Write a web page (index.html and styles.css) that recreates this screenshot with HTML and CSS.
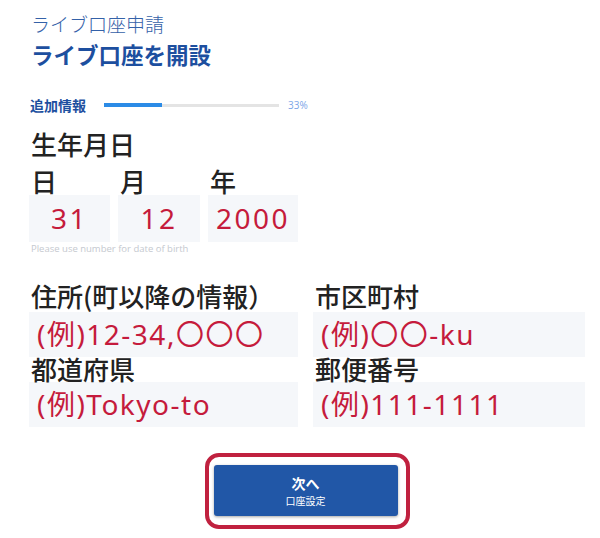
FILE: index.html
```html
<!DOCTYPE html>
<html lang="ja">
<head>
<meta charset="utf-8">
<title>ライブ口座を開設</title>
<link rel="stylesheet" href="styles.css">
</head>
<body>
<main class="page">
  <p class="eyebrow">ライブ口座申請</p>
  <h1 class="title">ライブ口座を開設</h1>

  <div class="progress">
    <span class="progress-label">追加情報</span>
    <div class="track"><div class="fill" style="width:33%"></div></div>
    <span class="progress-pct">33%</span>
  </div>

  <section class="birth">
    <h2 class="label big">生年月日</h2>
    <div class="birth-row">
      <div class="birth-col day">
        <div class="label">日</div>
        <div class="field center">31</div>
      </div>
      <div class="birth-col month">
        <div class="label">月</div>
        <div class="field center">12</div>
      </div>
      <div class="birth-col year">
        <div class="label">年</div>
        <div class="field center">2000</div>
      </div>
    </div>
    <p class="hint">Please use number for date of birth</p>
  </section>

  <section class="address">
    <div class="addr-col left">
      <div class="label">住所(町以降の情報）</div>
      <div class="field">(例)12-34,〇〇〇</div>
      <div class="label">都道府県</div>
      <div class="field">(例)Tokyo-to</div>
    </div>
    <div class="addr-col right">
      <div class="label">市区町村</div>
      <div class="field">(例)〇〇-ku</div>
      <div class="label">郵便番号</div>
      <div class="field">(例)111-1111</div>
    </div>
  </section>

  <div class="cta">
    <button class="next" type="button">
      <span class="next-main">次へ</span>
      <span class="next-sub">口座設定</span>
    </button>
  </div>
</main>
</body>
</html>
```

FILE: styles.css
```css
* { box-sizing: border-box; }

html, body {
  margin: 0;
  padding: 0;
  background: #ffffff;
}

body {
  font-family: "Noto Sans CJK JP", "Noto Sans", sans-serif;
  color: #222222;
}

.page {
  width: 556px;
  margin-left: 29px;
  padding-top: 10px;
}

.eyebrow {
  margin: 0 0 0 2px;
  font-size: 19px;
  line-height: 28px;
  font-weight: 300;
  color: #3461a8;
}

.title {
  margin: 1px 0 0 2px;
  font-size: 22.5px;
  line-height: 30px;
  font-weight: 700;
  color: #1d4f9f;
}

.progress {
  margin-top: 26px;
  height: 20px;
  display: flex;
  align-items: center;
  padding-left: 1px;
}

.progress-label {
  font-size: 14px;
  font-weight: 700;
  color: #1d4f9f;
  width: 74px;
}

.track {
  width: 175px;
  height: 3px;
  background: #e4e4e4;
  display: flex;
  align-items: center;
}

.fill {
  height: 4px;
  background: #2b8be6;
}

.progress-pct {
  margin-left: 9px;
  font-family: "Open Sans", "Noto Sans", sans-serif;
  font-size: 10px;
  color: #7ba6e8;
}

.label {
  font-size: 26px;
  line-height: 24px;
  font-weight: 500;
  color: #222222;
  padding-left: 2px;
  white-space: nowrap;
}

.label.big {
  margin: 14px 0 0 0;
  line-height: 30px;
}

.birth-row {
  margin-top: 9px;
  display: flex;
  gap: 8px;
}

.birth-col.day { width: 81px; }
.birth-col.month { width: 82px; }
.birth-col.year { width: 90px; }

.birth-col .label {
  line-height: 26px;
  margin-bottom: 1px;
}

.field {
  background: #f5f7fa;
  color: #c51b3c;
  font-family: "Noto Sans", "Noto Sans CJK JP", sans-serif;
  font-size: 28px;
  font-weight: 400;
  letter-spacing: 1.5px;
  height: 45px;
  line-height: 45px;
  padding-left: 8px;
  white-space: nowrap;
}

.birth .field {
  height: 47px;
  line-height: 47px;
  padding-left: 0;
  letter-spacing: 2.5px;
}

.field.center { text-align: center; }

.hint {
  margin: 1px 0 0 2px;
  font-family: "Open Sans", "Noto Sans", sans-serif;
  font-size: 9.5px;
  line-height: 12px;
  color: #c5c9cf;
}

.address {
  margin-top: 26px;
  display: flex;
  gap: 15px;
}

.addr-col.left { width: 269px; }
.addr-col.right { width: 272px; }

.addr-col .label {
  line-height: 30px;
  margin-bottom: 1px;
}

.addr-col .label + .field + .label {
  line-height: 24px;
  margin-bottom: 1px;
}

.cta {
  margin-top: 26px;
  width: 205px;
  margin-left: auto;
  margin-right: auto;
  border: 4px solid #c0213f;
  border-radius: 14px;
  padding: 8px 8px 9px 5px;
}

.next {
  width: 184px;
  height: 51px;
  border: none;
  border-radius: 3px;
  background: #2157a7;
  box-shadow: 0 1px 3px rgba(0, 0, 0, 0.35);
  color: #ffffff;
  font-family: "Noto Sans CJK JP", sans-serif;
  display: flex;
  flex-direction: column;
  align-items: center;
  justify-content: center;
  padding: 0;
}

.next-main {
  font-size: 14px;
  font-weight: 700;
  line-height: 18px;
}

.next-sub {
  font-size: 10px;
  line-height: 14px;
  margin-top: 2px;
}
```
